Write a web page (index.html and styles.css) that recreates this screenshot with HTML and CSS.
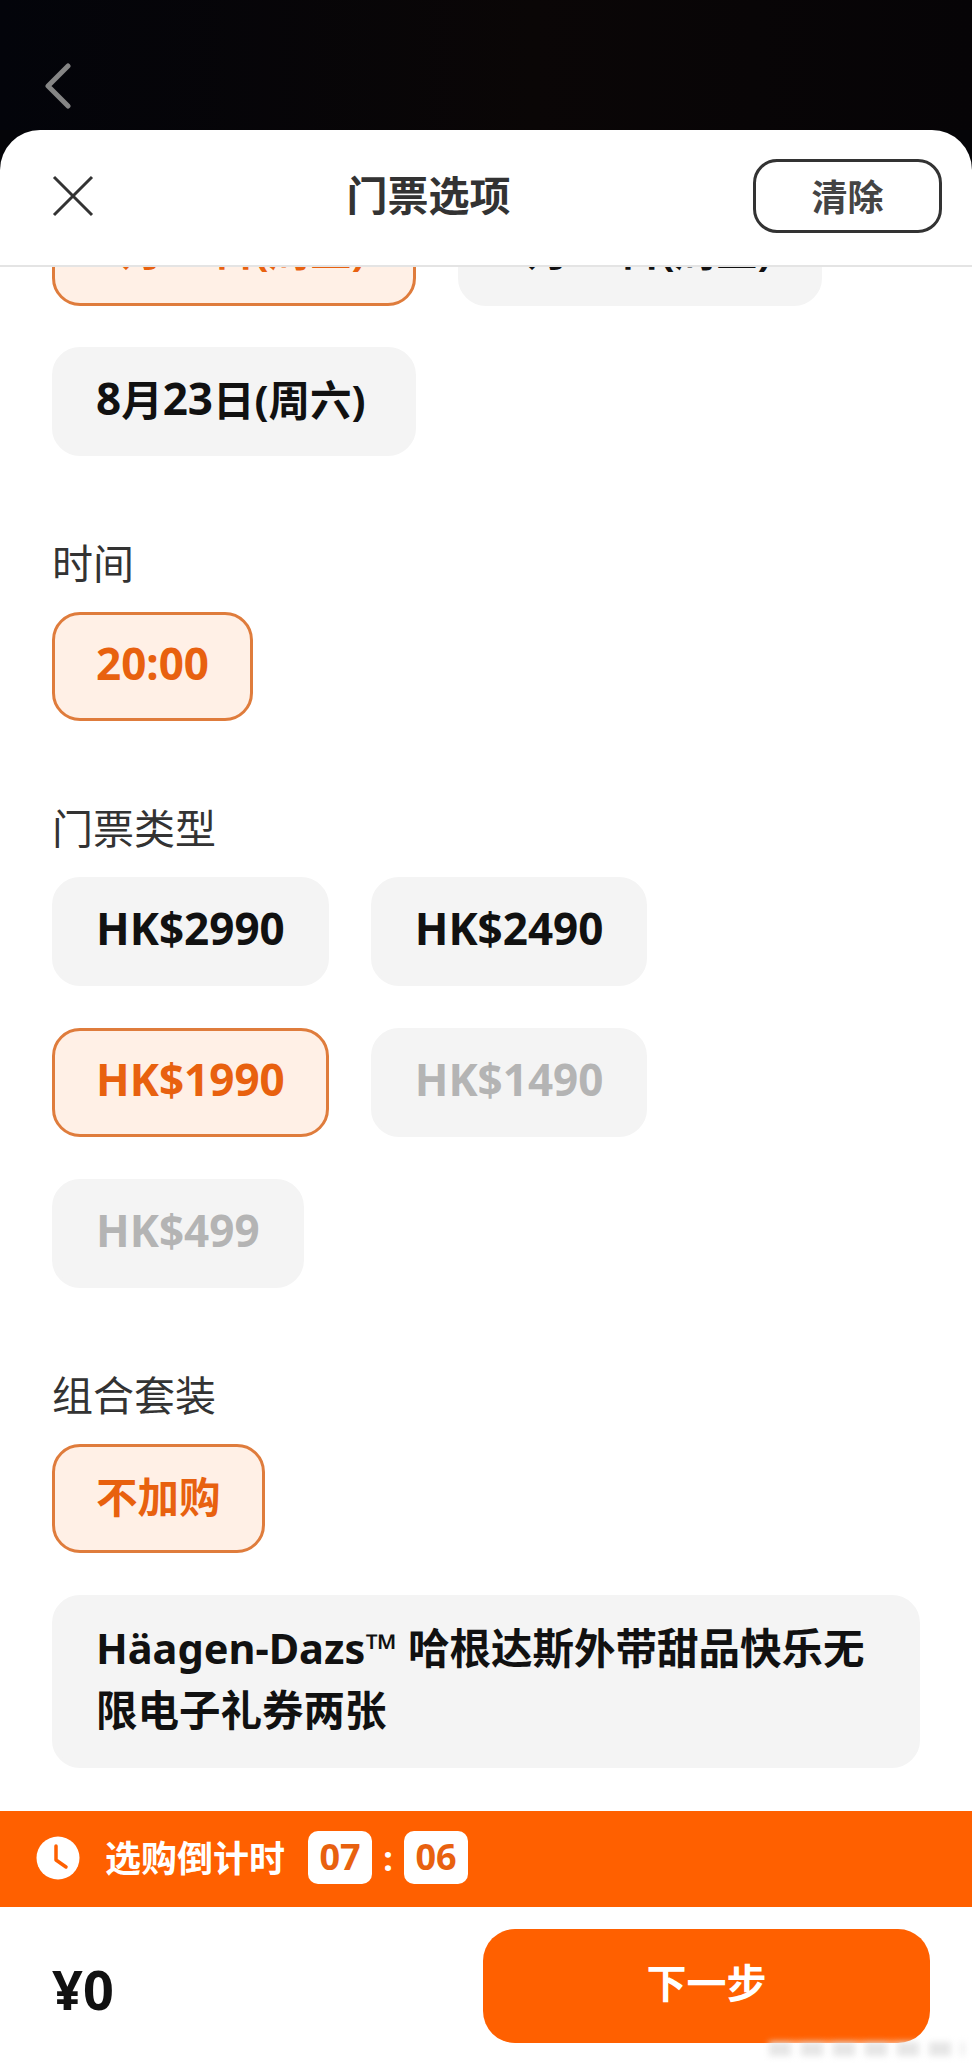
FILE: index.html
```html
<!DOCTYPE html>
<html lang="zh-CN">
<head>
    <meta charset="UTF-8">
    <meta name="viewport" content="width=device-width, initial-scale=1.0">
    <title>门票选项</title>
    <link rel="stylesheet" href="styles.css">
</head>
<body>
    <div class="screen">
        <div class="top-bar">
            <svg class="back-icon" width="30" height="46" viewBox="0 0 30 46"><path d="M25 3 L5 23 L25 43" fill="none" stroke="#858585" stroke-width="5" stroke-linecap="round" stroke-linejoin="round"/></svg>
        </div>

        <div class="sheet">
            <div class="sheet-header">
                <svg class="close-icon" width="42" height="42" viewBox="0 0 42 42"><path d="M2 2 L40 40 M40 2 L2 40" fill="none" stroke="#333" stroke-width="3"/></svg>
                <h1 class="sheet-title">门票选项</h1>
                <button class="clear-btn">清除</button>
            </div>

            <div class="options">
                <div class="options-inner">
                    <div class="group">
                        <div class="chips chips-dates">
                            <div class="chip chip-date selected"><span class="num">8</span>月<span class="num">22</span>日(周五)</div>
                            <div class="chip chip-date"><span class="num">8</span>月<span class="num">22</span>日(周五)</div>
                            <div class="chip chip-date"><span class="num">8</span>月<span class="num">23</span>日(周六)</div>
                        </div>
                    </div>
                    <div class="group">
                        <div class="group-label">时间</div>
                        <div class="chips">
                            <div class="chip num selected">20:00</div>
                        </div>
                    </div>
                    <div class="group">
                        <div class="group-label">门票类型</div>
                        <div class="chips">
                            <div class="chip num">HK$2990</div>
                            <div class="chip num">HK$2490</div>
                            <div class="chip num selected">HK$1990</div>
                            <div class="chip num disabled">HK$1490</div>
                            <div class="chip num disabled">HK$499</div>
                        </div>
                    </div>
                    <div class="group">
                        <div class="group-label">组合套装</div>
                        <div class="chips">
                            <div class="chip selected">不加购</div>
                            <div class="chip chip-wide">Häagen-Dazs™ 哈根达斯外带甜品快乐无限电子礼券两张</div>
                        </div>
                    </div>
                </div>
            </div>

            <div class="countdown">
                <svg class="clock-icon" width="44" height="44" viewBox="0 0 44 44"><circle cx="22" cy="22" r="21.5" fill="#fff"/><path d="M20 10 V24 L30 31" fill="none" stroke="#ff6000" stroke-width="3.5" stroke-linecap="round" stroke-linejoin="round"/></svg>
                <span class="countdown-label">选购倒计时</span>
                <span class="time-box">07</span>
                <span class="time-sep">:</span>
                <span class="time-box">06</span>
            </div>

            <div class="footer">
                <div class="total">¥0</div>
                <button class="next-btn">下一步</button>
                <div class="watermark"></div>
            </div>
        </div>
    </div>
</body>
</html>
```

FILE: styles.css
```css
* {
    box-sizing: border-box;
}
body {
    margin: 0;
    font-family: "Noto Sans", "Noto Sans CJK SC", sans-serif;
    color: #111;
    background: #050508;
}
.screen {
    display: flex;
    flex-direction: column;
    height: 100vh;
    overflow: hidden;
}
.top-bar {
    height: 130px;
    flex: none;
    padding: 63px 0 0 43px;
    background: linear-gradient(90deg, #03040a 0%, #0a0606 55%, #060406 100%);
}
.back-icon {
    display: block;
}
.sheet {
    flex: 1;
    min-height: 0;
    display: flex;
    flex-direction: column;
    background: #fff;
    border-radius: 40px 40px 0 0;
    overflow: hidden;
}
.sheet-header {
    flex: none;
    height: 137px;
    display: flex;
    align-items: center;
    padding: 0 30px 3px 52px;
    border-bottom: 2px solid #e4e4e4;
}
.close-icon {
    flex: none;
}
.sheet-title {
    flex: 1;
    margin: 0;
    padding: 0 0 2px 10px;
    text-align: center;
    font-size: 41px;
    font-weight: 700;
    color: #333;
    line-height: 1;
}
.clear-btn {
    width: 189px;
    height: 74px;
    padding: 0 0 2px;
    background: #fff;
    border: 3px solid #333;
    border-radius: 24px;
    font-family: inherit;
    font-size: 36px;
    font-weight: 700;
    color: #444;
}
.options {
    flex: 1;
    min-height: 0;
    overflow: hidden;
}
.options-inner {
    margin-top: -70px;
    padding: 0 52px;
    display: flex;
    flex-direction: column;
    gap: 82px;
}
.group-label {
    font-size: 41px;
    line-height: 50px;
    color: #333;
    margin-bottom: 24px;
}
.chips {
    display: flex;
    flex-wrap: wrap;
    gap: 42px;
}
.chips-dates {
    row-gap: 41px;
}
.chip {
    min-height: 109px;
    display: flex;
    align-items: center;
    padding: 0 41px 8px;
    background: #f4f4f4;
    border: 3px solid #f4f4f4;
    border-radius: 28px;
    font-size: 41.5px;
    font-weight: 700;
}
.num {
    font-size: 44px;
}
.chip-date {
    width: 364px;
    white-space: nowrap;
}
.selected {
    background: #fff0e6;
    border-color: #df7c3c;
    color: #e8610f;
}
.disabled {
    color: #b4b4b4;
}
.chip-wide {
    display: block;
    width: 100%;
    padding: 19px 41px 24px;
    line-height: 62px;
}
.countdown {
    flex: none;
    height: 96px;
    display: flex;
    align-items: center;
    padding: 0 0 3px 36px;
    background: #ff6000;
    color: #fff;
}
.clock-icon {
    flex: none;
    margin-right: 25px;
}
.countdown-label {
    font-size: 36px;
    font-weight: 700;
    margin-right: 23px;
    padding-bottom: 3px;
}
.time-box {
    width: 64px;
    height: 53px;
    padding-bottom: 3px;
    display: flex;
    align-items: center;
    justify-content: center;
    background: #fff;
    border-radius: 10px;
    color: #e8610f;
    font-size: 36px;
    font-weight: 700;
}
.time-sep {
    width: 32px;
    text-align: center;
    font-size: 34px;
    font-weight: 700;
}
.footer {
    position: relative;
    flex: none;
    height: 157px;
    display: flex;
    align-items: center;
    justify-content: space-between;
    padding: 0 42px 0 52px;
}
.total {
    font-size: 54px;
    font-weight: 700;
    line-height: 1;
    padding-top: 6px;
}
.next-btn {
    width: 447px;
    height: 114px;
    border: none;
    border-radius: 32px;
    background: #ff6000;
    color: #fff;
    font-family: inherit;
    font-size: 40px;
    font-weight: 700;
    padding-bottom: 10px;
}
.watermark {
    position: absolute;
    right: 8px;
    bottom: 8px;
    width: 195px;
    height: 14px;
    background: repeating-linear-gradient(90deg, #e6e6e6 0 22px, rgba(255, 255, 255, 0.7) 22px 32px);
    filter: blur(3px);
}
```
